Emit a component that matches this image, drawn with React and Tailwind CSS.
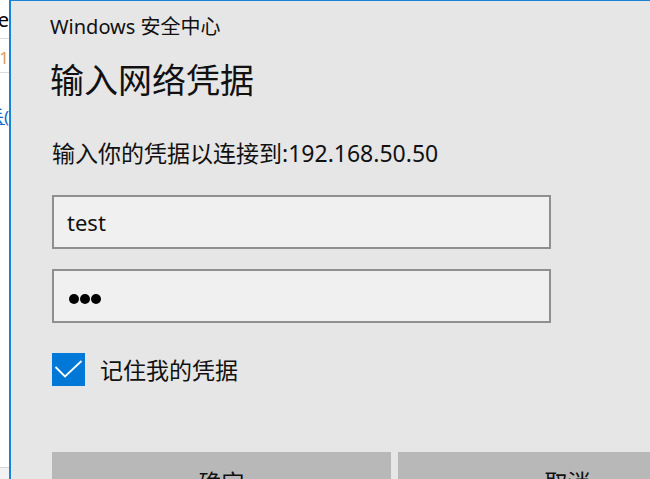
import React from 'react';

const font = { fontFamily: '"Noto Sans", "Noto Sans CJK SC", sans-serif' };

// cut-off window behind the dialog
const BackStrip = () => (
  <div className="w-[9px] shrink-0 h-full bg-white overflow-hidden flex flex-col items-end">
    <div className="w-[60px] text-right text-[20px] leading-[20px] mt-[10px] text-black">Re</div>
    <div className="w-[60px] h-px bg-[#dcdcdc] mt-[8px]" />
    <div className="w-[60px] text-right text-[17px] leading-[20px] mt-[9px]">
      <span className="text-[#555]">0.</span>
      <span className="text-[#d9a060]">1</span>
    </div>
    <div className="w-[60px] h-px bg-[#dcdcdc] mt-[4px]" />
    <div className="w-[60px] text-right text-[17px] leading-[20px] mt-[34px] text-[#1a66cc] underline">丢(</div>
    <div className="flex-1" />
    <div className="w-[60px] h-[12px] border-t border-[#d4d4d4] bg-[#f2f2f2]" />
  </div>
);

const Field = ({ children }) => (
  <div className="w-[499px] h-[54px] border-2 border-[#8f8f8f] bg-[#f0f0f0] flex items-center pl-[13px]">
    {children}
  </div>
);

export default function App() {
  return (
    <div className="w-[650px] h-[479px] overflow-hidden flex bg-white" style={font}>
      <BackStrip />
      <div className="flex-1 h-full bg-[#e6e6e6] border-l-2 border-t border-[#1883d7] pl-[41px] flex flex-col text-[#111]">
        <div className="text-[20px] leading-[20px] mt-[16px] -ml-[2px]">Windows 安全中心</div>
        <div className="text-[34px] leading-[40px] mt-[23px] -ml-[2px]">输入网络凭据</div>
        <div className="text-[23px] leading-[28px] mt-[39px]">输入你的凭据以连接到:192.168.50.50</div>

        <div className="mt-[28px]">
          <Field>
            <span className="text-[22px] leading-[28px]">test</span>
          </Field>
        </div>
        <div className="mt-[20px]">
          <Field>
            <div className="flex gap-[1px] mt-[5px] ml-[2px]">
              <span className="w-[10px] h-[10px] rounded-full bg-black" />
              <span className="w-[10px] h-[10px] rounded-full bg-black" />
              <span className="w-[10px] h-[10px] rounded-full bg-black" />
            </div>
          </Field>
        </div>

        <div className="mt-[30px] flex items-center gap-[15px]">
          <div className="w-[33px] h-[33px] bg-[#0078d7] flex items-center justify-center">
            <svg width="33" height="33" viewBox="0 0 33 33">
              <polyline points="3.5,14 13,23.5 29.5,8" fill="none" stroke="#fff" strokeWidth="1.8" />
            </svg>
          </div>
          <span className="text-[23px] leading-[28px]">记住我的凭据</span>
        </div>

        <div className="mt-[66px] flex gap-[7px]">
          <div className="w-[339px] h-[60px] shrink-0 bg-[#b8b8b8] flex items-center justify-center text-[23px]">确定</div>
          <div className="w-[339px] h-[60px] shrink-0 bg-[#b8b8b8] flex items-center justify-center text-[23px]">取消</div>
        </div>
      </div>
    </div>
  );
}
